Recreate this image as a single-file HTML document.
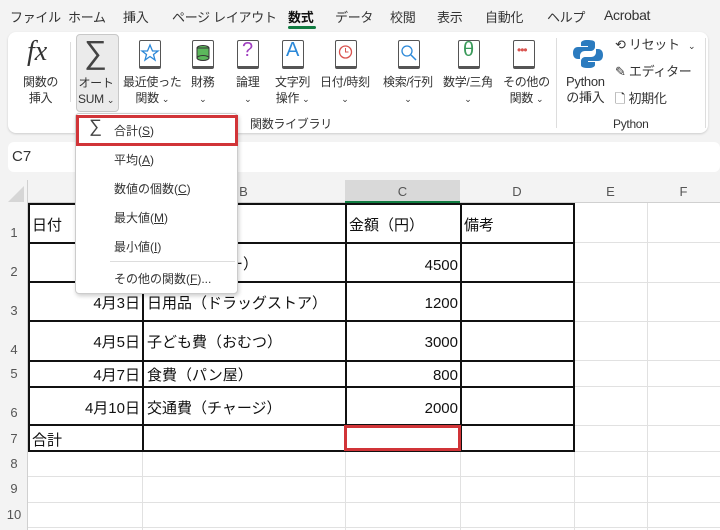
<!DOCTYPE html>
<html><head><meta charset="utf-8"><style>
*{box-sizing:border-box;margin:0;padding:0}
body{width:720px;height:530px;overflow:hidden;background:#f3f3f3;font-family:"Liberation Sans","Noto Sans CJK JP",sans-serif;position:relative;color:#222}
.a{position:absolute}
.tab{position:absolute;top:7px;font-size:13px;color:#333;letter-spacing:-0.3px}
.rb{position:absolute;left:8px;top:32px;width:700px;height:101px;background:#fff;border-radius:8px;box-shadow:0 1px 2px #ccc}
.lbl{position:absolute;font-size:12px;text-align:center;line-height:16px;color:#333;white-space:nowrap;letter-spacing:-0.3px}
.book{position:absolute;width:22px;height:29px;border:1.5px solid #555;border-bottom-width:3px;border-radius:2px;background:#fff}
.chev{font-size:9px}
.ch{position:absolute;top:180px;height:23px;font-size:13px;color:#555;text-align:center;line-height:23px}
.rh{position:absolute;left:0;width:28px;font-size:13px;color:#555;text-align:center}
.hl{position:absolute;height:1px;background:#e1e1e1;left:28px;width:692px}
.vl{position:absolute;width:1px;background:#e1e1e1;top:203px;height:327px}
.t{position:absolute;font-size:15px;color:#111;white-space:nowrap}
.r{position:absolute;font-size:15px;color:#111;white-space:nowrap;text-align:right}
.bk{position:absolute;background:#111}
.mi{position:absolute;left:114px;font-size:12px;color:#333}
</style></head><body>
<div class="tab" style="left:10px">ファイル</div>
<div class="tab" style="left:68px">ホーム</div>
<div class="tab" style="left:123px">挿入</div>
<div class="tab" style="left:172px">ページ レイアウト</div>
<div class="tab" style="left:288px;font-weight:bold;color:#111">数式</div>
<div class="a" style="left:288px;top:26px;width:28px;height:3px;background:#107c41;border-radius:2px"></div>
<div class="tab" style="left:335px">データ</div>
<div class="tab" style="left:390px">校閲</div>
<div class="tab" style="left:437px">表示</div>
<div class="tab" style="left:485px">自動化</div>
<div class="tab" style="left:547px">ヘルプ</div>
<div class="tab" style="left:604px;font-size:14px">Acrobat</div>

<div class="rb"></div>
<div class="a" style="left:27px;top:36px;font-family:'Liberation Serif',serif;font-style:italic;font-size:28px;color:#333">fx</div>
<div class="lbl" style="left:23px;top:74px">関数の<br>挿入</div>
<div class="a" style="left:70px;top:42px;width:1px;height:60px;background:#ddd"></div>
<div class="a" style="left:76px;top:34px;width:43px;height:78px;background:#ebebeb;border:1px solid #c8c8c8;border-radius:4px"></div>
<div class="a" style="left:84px;top:34px;font-size:32px;color:#444">∑</div>
<div class="lbl" style="left:78px;top:75px">オート<br>SUM <span class="chev">⌄</span></div>

<div class="book" style="left:139px;top:40px"><svg width="20" height="20" style="position:absolute;left:0;top:2px"><polygon points="10,2 12.5,8 18,8 13.5,11.5 15,17 10,13.5 5,17 6.5,11.5 2,8 7.5,8" fill="none" stroke="#2b88d8" stroke-width="1.3"/></svg></div>
<div class="lbl" style="left:123px;top:74px">最近使った<br>関数 <span class="chev">⌄</span></div>
<div class="book" style="left:192px;top:40px"><svg width="20" height="22" style="position:absolute;left:1px;top:2px"><ellipse cx="9" cy="5" rx="6" ry="2.5" fill="#5cb85c" stroke="#333"/><rect x="3" y="5" width="12" height="10" fill="#5cb85c" stroke="#333"/><ellipse cx="9" cy="15" rx="6" ry="2.5" fill="#5cb85c" stroke="#333"/></svg></div>
<div class="lbl" style="left:191px;top:74px">財務<br><span class="chev">⌄</span></div>
<div class="book" style="left:237px;top:40px"><div class="a" style="left:4px;top:-2px;font-size:20px;color:#a040c0">?</div></div>
<div class="lbl" style="left:236px;top:74px">論理<br><span class="chev">⌄</span></div>
<div class="book" style="left:282px;top:40px"><div class="a" style="left:3px;top:-2px;font-size:20px;color:#2b88d8">A</div></div>
<div class="lbl" style="left:275px;top:74px">文字列<br>操作 <span class="chev">⌄</span></div>
<div class="book" style="left:335px;top:40px"><svg width="20" height="20" style="position:absolute;left:0;top:3px"><circle cx="9.5" cy="8" r="6" fill="none" stroke="#d9534f" stroke-width="1.3"/><path d="M9.5 4v4h3" fill="none" stroke="#d9534f"/></svg></div>
<div class="lbl" style="left:320px;top:74px">日付/時刻<br><span class="chev">⌄</span></div>
<div class="book" style="left:398px;top:40px"><svg width="20" height="20" style="position:absolute;left:0;top:2px"><circle cx="8" cy="8" r="5" fill="none" stroke="#2b88d8" stroke-width="1.3"/><path d="M12 12l5 5" stroke="#2b88d8" stroke-width="1.5"/></svg></div>
<div class="lbl" style="left:383px;top:74px">検索/行列<br><span class="chev">⌄</span></div>
<div class="book" style="left:458px;top:40px"><div class="a" style="left:4px;top:-2px;font-size:20px;color:#3a9a5a">θ</div></div>
<div class="lbl" style="left:443px;top:74px">数学/三角<br><span class="chev">⌄</span></div>
<div class="book" style="left:513px;top:40px"><div class="a" style="left:3px;top:2px;font-size:12px;color:#d9534f;letter-spacing:-1px">•••</div></div>
<div class="lbl" style="left:503px;top:74px">その他の<br>関数 <span class="chev">⌄</span></div>
<div class="lbl" style="left:250px;top:116px">関数ライブラリ</div>
<div class="a" style="left:556px;top:38px;width:1px;height:90px;background:#ddd"></div>
<svg class="a" style="left:572px;top:38px" width="32" height="32"><path d="M15 2c-6 0-6 3-6 3v3h7v1H6c-3 0-5 2-5 6s2 6 5 6h2v-3c0-3 2-5 5-5h6c2 0 4-2 4-4V5c0-2-2-3-8-3z" fill="#2b7bbf"/><path d="M17 30c6 0 6-3 6-3v-3h-7v-1h10c3 0 5-2 5-6s-2-6-5-6h-2v3c0 3-2 5-5 5h-6c-2 0-4 2-4 4v4c0 2 2 3 8 3z" fill="#2b7bbf"/></svg>
<div class="lbl" style="left:566px;top:74px;font-size:13px">Python<br>の挿入</div>
<div class="lbl" style="left:615px;top:37px;font-size:13px">⟲ リセット</div>
<div class="lbl" style="left:688px;top:37px"><span class="chev">⌄</span></div>
<div class="lbl" style="left:615px;top:64px;font-size:13px">✎ エディター</div>
<div class="lbl" style="left:615px;top:91px;font-size:13px">🗋 初期化</div>
<div class="lbl" style="left:613px;top:116px;font-size:12px">Python</div>
<div class="a" style="left:705px;top:38px;width:1px;height:90px;background:#ddd"></div>

<div class="a" style="left:8px;top:142px;width:712px;height:30px;background:#fff;border-radius:6px"></div>
<div class="a" style="left:12px;top:148px;font-size:15px;color:#333">C7</div>

<div class="a" style="left:0;top:180px;width:720px;height:350px;background:#fff"></div>
<div class="a" style="left:0;top:180px;width:720px;height:23px;background:#f3f3f3;border-bottom:1px solid #d0d0d0"></div>
<div class="a" style="left:0;top:180px;width:28px;height:350px;background:#f3f3f3;border-right:1px solid #d0d0d0"></div>
<div class="a" style="left:8px;top:186px;width:0;height:0;border-left:16px solid transparent;border-bottom:16px solid #d6d6d6"></div>
<div class="a" style="left:345px;top:180px;width:115px;height:23px;background:#d9d9d9;border-bottom:2px solid #107c41"></div>
<div class="ch" style="left:142px;width:203px">B</div>
<div class="ch" style="left:345px;width:115px">C</div>
<div class="ch" style="left:460px;width:114px">D</div>
<div class="ch" style="left:574px;width:73px">E</div>
<div class="ch" style="left:647px;width:73px">F</div>
<div class="vl" style="left:142px"></div><div class="vl" style="left:345px"></div><div class="vl" style="left:460px"></div><div class="vl" style="left:574px"></div><div class="vl" style="left:647px"></div>
<div class="hl" style="top:242px"></div><div class="hl" style="top:282px"></div><div class="hl" style="top:321px"></div><div class="hl" style="top:360px"></div><div class="hl" style="top:386px"></div><div class="hl" style="top:425px"></div><div class="hl" style="top:451px"></div><div class="hl" style="top:476px"></div><div class="hl" style="top:502px"></div><div class="hl" style="top:527px"></div>
<div class="rh" style="top:225px">1</div><div class="rh" style="top:264px">2</div><div class="rh" style="top:303px">3</div><div class="rh" style="top:342px">4</div><div class="rh" style="top:366px">5</div><div class="rh" style="top:405px">6</div><div class="rh" style="top:431px">7</div><div class="rh" style="top:456px">8</div><div class="rh" style="top:481px">9</div><div class="rh" style="top:507px">10</div>
<div class="bk" style="left:28px;top:203px;width:547px;height:2px"></div>
<div class="bk" style="left:28px;top:242px;width:547px;height:2px"></div>
<div class="bk" style="left:28px;top:281px;width:547px;height:2px"></div>
<div class="bk" style="left:28px;top:320px;width:547px;height:2px"></div>
<div class="bk" style="left:28px;top:360px;width:547px;height:2px"></div>
<div class="bk" style="left:28px;top:386px;width:547px;height:2px"></div>
<div class="bk" style="left:28px;top:424px;width:547px;height:2px"></div>
<div class="bk" style="left:28px;top:450px;width:547px;height:2px"></div>
<div class="bk" style="left:28px;top:203px;width:2px;height:249px"></div>
<div class="bk" style="left:142px;top:243px;width:2px;height:209px"></div>
<div class="bk" style="left:345px;top:203px;width:2px;height:249px"></div>
<div class="bk" style="left:460px;top:203px;width:2px;height:249px"></div>
<div class="bk" style="left:573px;top:203px;width:2px;height:249px"></div>
<div class="a" style="left:344px;top:425px;width:117px;height:26px;border:3px solid #d13438"></div>
<div class="t" style="left:32px;top:214px">日付</div>
<div class="t" style="left:349px;top:214px">金額（円）</div>
<div class="t" style="left:464px;top:214px">備考</div>
<div class="t" style="left:228px;top:253px">ー）</div>
<div class="r" style="left:340px;width:118px;top:254px;padding-top:3px">4500</div>
<div class="r" style="left:30px;width:110px;top:292px">4月3日</div><div class="t" style="left:147px;top:292px">日用品（ドラッグストア）</div><div class="r" style="left:340px;width:118px;top:295px">1200</div>
<div class="r" style="left:30px;width:110px;top:331px">4月5日</div><div class="t" style="left:147px;top:331px">子ども費（おむつ）</div><div class="r" style="left:340px;width:118px;top:334px">3000</div>
<div class="r" style="left:30px;width:110px;top:364px">4月7日</div><div class="t" style="left:147px;top:364px">食費（パン屋）</div><div class="r" style="left:340px;width:118px;top:367px">800</div>
<div class="r" style="left:30px;width:110px;top:397px">4月10日</div><div class="t" style="left:147px;top:397px">交通費（チャージ）</div><div class="r" style="left:340px;width:118px;top:400px">2000</div>
<div class="t" style="left:32px;top:429px">合計</div>
<div class="a" style="left:75px;top:113px;width:163px;height:181px;background:#fff;border:1px solid #ccc;border-radius:4px;box-shadow:1px 2px 4px rgba(0,0,0,.2)"></div>
<div class="a" style="left:76px;top:115px;width:162px;height:31px;border:3px solid #d13438"></div>
<div class="a" style="left:89px;top:116px;font-size:18px;color:#444">∑</div>
<div class="mi" style="top:122px">合計(<u>S</u>)</div>
<div class="mi" style="top:151px">平均(<u>A</u>)</div>
<div class="mi" style="top:180px">数値の個数(<u>C</u>)</div>
<div class="mi" style="top:209px">最大値(<u>M</u>)</div>
<div class="mi" style="top:238px">最小値(<u>I</u>)</div>
<div class="a" style="left:110px;top:261px;width:125px;height:1px;background:#ddd"></div>
<div class="mi" style="top:270px">その他の関数(<u>F</u>)...</div>
</body></html>
